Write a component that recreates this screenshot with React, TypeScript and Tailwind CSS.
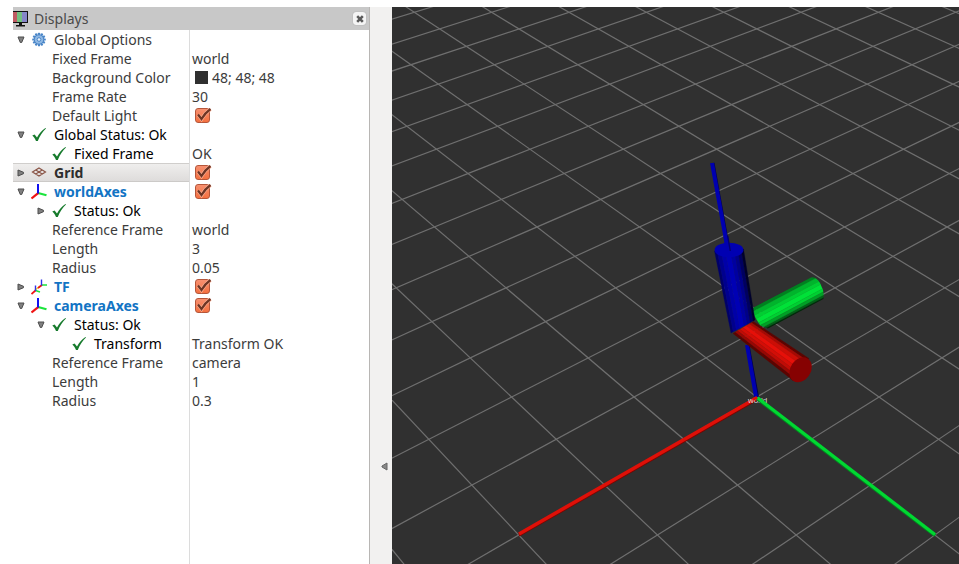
import { useState } from "react";
import type { ReactNode } from "react";

type Pt = [number, number];

type RowData = {
  id: string;
  depth: 0 | 1 | 2;
  label: string;
  kind: "group" | "status" | "display" | "property";
  icon?: "gear" | "check" | "grid" | "axes" | "tf";
  open?: boolean;
  value?: string;
  swatch?: boolean;
  checkbox?: boolean;
  selected?: boolean;
};

const ROWS: RowData[] = [
  { id: "options", depth: 0, label: "Global Options", kind: "group", icon: "gear", open: true },
  { id: "options-frame", depth: 1, label: "Fixed Frame", kind: "property", value: "world" },
  { id: "options-bg", depth: 1, label: "Background Color", kind: "property", value: "48; 48; 48", swatch: true },
  { id: "options-rate", depth: 1, label: "Frame Rate", kind: "property", value: "30" },
  { id: "options-light", depth: 1, label: "Default Light", kind: "property", checkbox: true },
  { id: "status", depth: 0, label: "Global Status: Ok", kind: "status", icon: "check", open: true },
  { id: "status-frame", depth: 1, label: "Fixed Frame", kind: "status", icon: "check", value: "OK" },
  { id: "grid", depth: 0, label: "Grid", kind: "display", icon: "grid", open: false, checkbox: true, selected: true },
  { id: "world", depth: 0, label: "worldAxes", kind: "display", icon: "axes", open: true, checkbox: true },
  { id: "world-status", depth: 1, label: "Status: Ok", kind: "status", icon: "check", open: false },
  { id: "world-frame", depth: 1, label: "Reference Frame", kind: "property", value: "world" },
  { id: "world-length", depth: 1, label: "Length", kind: "property", value: "3" },
  { id: "world-radius", depth: 1, label: "Radius", kind: "property", value: "0.05" },
  { id: "tf", depth: 0, label: "TF", kind: "display", icon: "tf", open: false, checkbox: true },
  { id: "camera", depth: 0, label: "cameraAxes", kind: "display", icon: "axes", open: true, checkbox: true },
  { id: "camera-status", depth: 1, label: "Status: Ok", kind: "status", icon: "check", open: true },
  { id: "camera-transform", depth: 2, label: "Transform", kind: "status", icon: "check", value: "Transform OK" },
  { id: "camera-frame", depth: 1, label: "Reference Frame", kind: "property", value: "camera" },
  { id: "camera-length", depth: 1, label: "Length", kind: "property", value: "1" },
  { id: "camera-radius", depth: 1, label: "Radius", kind: "property", value: "0.3" },
];

const INDENT = ["pl-0", "pl-5", "pl-10"];

function MonitorIcon() {
  return (
    <svg width="15" height="16" viewBox="0 0 15 16" aria-hidden="true">
      <rect x="-1" y="0" width="16" height="12" fill="#111" />
      <rect x="0" y="1" width="4" height="10" fill="#c05a62" />
      <rect x="4" y="1" width="5" height="10" fill="#74c080" />
      <rect x="9" y="1" width="5" height="10" fill="#8585c8" />
      <path d="M6 12h3v2h3v1.5H3V14h3z" fill="#111" />
    </svg>
  );
}

function GearIcon() {
  const teeth = Array.from({ length: 12 }, (_, i) => i * 30);
  return (
    <svg width="16" height="16" viewBox="0 0 16 16" aria-hidden="true">
      {teeth.map((a) => (
        <rect key={a} x="6.900" y="0.700" width="2.200" height="3" rx=".6" fill="#4a86c8" transform={`rotate(${a} 8 7.500)`} />
      ))}
      <circle cx="8" cy="7.500" r="4.700" fill="#8fb8e4" stroke="#4a86c8" strokeWidth="1" />
      <circle cx="8" cy="7.500" r="1.800" fill="#e8f1fa" stroke="#3f7fc4" strokeWidth=".9" />
    </svg>
  );
}

function CheckIcon() {
  return (
    <svg width="16" height="16" viewBox="0 0 16 16" aria-hidden="true">
      <path d="M1.300 8.600 3.600 7.400 6 10.400C8 6.800 10.800 3.300 14.400 1L15 1.600C11.700 4.700 8.800 9 6.800 14H5C4.200 12 3 10 1.300 8.600z" fill="#167a2c" />
    </svg>
  );
}

function GridIcon() {
  return (
    <svg width="16" height="16" viewBox="0 0 16 16" aria-hidden="true">
      <path d="M8 3 14.500 7 8 11 1.500 7zM4.800 5l6.400 4M11.200 5l-6.400 4" fill="none" stroke="#8a5547" strokeWidth="1.200" />
    </svg>
  );
}

function AxesIcon() {
  return (
    <svg width="16" height="16" viewBox="0 0 16 16" aria-hidden="true">
      <path d="M7 9 15.500 11.300" stroke="#1be43c" strokeWidth="2.200" />
      <path d="M7.500 8.800 .5 14.500" stroke="#f01414" strokeWidth="2.200" />
      <path d="M7 9.500V0" stroke="#1010f0" strokeWidth="2" />
    </svg>
  );
}

function TfIcon() {
  return (
    <svg width="16" height="16" viewBox="0 0 16 16" aria-hidden="true">
      <path d="M4 11 10 6.500" stroke="#f0d020" strokeWidth="1.300" />
      <path d="M11 6H16M4.500 11.500 9 13" stroke="#1be43c" strokeWidth="1.500" />
      <path d="M11 6 7 9M4.500 11.500 .5 15" stroke="#f01414" strokeWidth="1.700" />
      <path d="M10.500 6.500V.5M4.500 12V6.500" stroke="#3030e8" strokeWidth="1.400" />
    </svg>
  );
}

const ICONS: Record<string, ReactNode> = {
  gear: <GearIcon />,
  check: <CheckIcon />,
  grid: <GridIcon />,
  axes: <AxesIcon />,
  tf: <TfIcon />,
};

function Expander({ open, label, onToggle }: { open: boolean; label: string; onToggle: () => void }) {
  return (
    <button type="button" aria-expanded={open} aria-label={`Toggle ${label}`} onClick={onToggle} className="flex h-full w-full items-center justify-center pr-0.5">
      <svg width="8" height="8" viewBox="0 0 8 8" aria-hidden="true">
        <path d={open ? "M1 1h6L4.700 6.500H3.300z" : "M1 1v6l5.500-2.300V3.300z"} fill="#808080" stroke="#4c4c4c" strokeWidth="1" strokeLinejoin="round" />
      </svg>
    </button>
  );
}

function Tick({ label }: { label: string }) {
  return (
    <label className="relative ml-[3px] block size-4">
      <input type="checkbox" defaultChecked aria-label={label} className="peer block size-[15px] appearance-none rounded-[3px] border border-[#b5563a] bg-white checked:bg-linear-to-b checked:from-[#f79070] checked:to-[#f4703f]" />
      <svg width="17" height="16" viewBox="0 0 17 16" aria-hidden="true" className="pointer-events-none absolute top-0 left-0 hidden peer-checked:block">
        <path d="M3 6.500 6.500 11Q10 5 15.500 1" fill="none" stroke="#fab096" strokeWidth="3.600" />
        <path d="M3 6.500 6.500 11Q10 5 15.500 1" fill="none" stroke="#6e3524" strokeWidth="2.200" />
      </svg>
    </label>
  );
}

function labelClass(row: RowData) {
  if (row.selected) return "font-bold text-[#2d2d2d]";
  if (row.kind === "display") return "font-bold text-[#1274c4]";
  if (row.kind === "status") return "text-black";
  return "text-[#3c3c3c]";
}

function DisplaysPanel() {
  const [open, setOpen] = useState<Record<string, boolean>>(() =>
    Object.fromEntries(ROWS.filter((r) => r.open !== undefined).map((r) => [r.id, !!r.open])),
  );

  let hiddenBelow = 99;
  const visible = ROWS.filter((row) => {
    if (row.depth > hiddenBelow) return false;
    hiddenBelow = row.open !== undefined && !open[row.id] ? row.depth : 99;
    return true;
  });

  return (
    <section aria-label="Displays" className="flex w-[357px] shrink-0 flex-col border-r border-[#b8b6b4] bg-white">
      <header className="flex h-[23px] shrink-0 items-center bg-[#c8c8c8] pr-[3px] text-[#4a4a4a]">
        <MonitorIcon />
        <h1 className="ml-1.5 flex-1">Displays</h1>
        <button type="button" aria-label="Close panel" className="flex size-[13px] items-center justify-center rounded-[3px] bg-[#f4f4f4] shadow-[0_0_1px_#888888]">
          <svg width="8" height="8" viewBox="0 0 8 8" aria-hidden="true">
            <path d="M1.200 1.200 6.800 6.800M6.800 1.200 1.200 6.800" stroke="#5a5a5a" strokeWidth="2.600" />
          </svg>
        </button>
      </header>
      <div className="flex flex-1 flex-col">
        <table className="w-full table-fixed border-separate border-spacing-0">
          <colgroup>
            <col className="w-[177px]" />
            <col />
          </colgroup>
          <tbody>
            {visible.map((row) => (
              <tr key={row.id} className="h-[19px]">
                <th scope="row" className={`h-[19px] border-r border-[#dcdcdc] p-0 text-left font-normal ${row.selected ? "bg-linear-to-b from-[#f0efee] to-[#dddbda] shadow-[inset_0_1px_#d0cecc,inset_0_-1px_#cccac8]" : ""}`}>
                  <div className={`flex h-[19px] items-center ${INDENT[row.depth]}`}>
                    <span className="h-full w-[18px] shrink-0">
                      {row.open !== undefined && (
                        <Expander open={open[row.id]} label={row.label} onToggle={() => setOpen({ ...open, [row.id]: !open[row.id] })} />
                      )}
                    </span>
                    {row.icon && <span className="mr-1.5 shrink-0">{ICONS[row.icon]}</span>}
                    <span className={`pl-px whitespace-nowrap ${labelClass(row)}`}>{row.label}</span>
                  </div>
                </th>
                <td className="h-[19px] p-0 pl-0.5 text-[#3c3c3c]">
                  {row.checkbox && <Tick label={row.label} />}
                  {row.value && (
                    <div className="flex h-[19px] items-center whitespace-nowrap">
                      {row.swatch && <span className="mr-1 ml-[3px] size-[13px] bg-[#303030]" />}
                      {row.value}
                    </div>
                  )}
                </td>
              </tr>
            ))}
          </tbody>
        </table>
        <div className="w-[177px] flex-1 border-r border-[#dcdcdc]" />
      </div>
    </section>
  );
}

/* Ground plane: cell spacing grows linearly with screen height, its inverse linearly with depth. */
function project(i: number, j: number): Pt {
  const spacing = 1 / (0.0081633 - 0.00031783 * (i + j));
  return [982 + spacing * ((j - i) / 2 - 1.84), 397 + (spacing - 122.5) / 0.1174];
}

const GRID_LINES = Array.from({ length: 61 }, (_, n) => n - 30).flatMap((k) => [
  [project(k, -18 - k), project(k, 7 - k)],
  [project(-18 - k, k), project(7 - k, k)],
]);

const mix = (a: Pt, b: Pt, t: number): Pt => [a[0] + (b[0] - a[0]) * t, a[1] + (b[1] - a[1]) * t];

function Facets({ near, far, stops }: { near: [Pt, Pt]; far: [Pt, Pt]; stops: [number, string][] }) {
  return (
    <>
      {stops.map(([t, color], n) => {
        const end = n + 1 < stops.length ? stops[n + 1][0] : 1;
        const pts = [mix(...near, t), mix(...far, t), mix(...far, end), mix(...near, end)];
        return <polygon key={n} points={pts.map((p) => p.join(",")).join(" ")} fill={color} stroke={color} strokeWidth="0.3" />;
      })}
    </>
  );
}

function Scene() {
  return (
    <svg role="img" aria-label="3D view" viewBox="392 7 567 557" preserveAspectRatio="xMinYMin slice" className="block h-full w-full">
      <g stroke="#6f6f6f" strokeWidth="1.2">
        {GRID_LINES.map(([a, b], n) => (
          <line key={n} x1={a[0]} y1={a[1]} x2={b[0]} y2={b[1]} />
        ))}
      </g>

      <path d="M713 163 729 251M748 345 757.500 397" stroke="#000050" strokeWidth="3" />
      <path d="M712 163 728 251M747 345 756 397" stroke="#0000b0" strokeWidth="4" />
      <path d="M757 399.500 519 535.500" stroke="#7a0400" strokeWidth="2.500" />
      <path d="M757 397.700 519 534" stroke="#de1008" strokeWidth="3.600" />
      <text x="748" y="403" fontSize="8" fill="#d8d8d8" fontFamily="Liberation Sans, sans-serif">world</text>
      <path d="M757 398.500 935 535.500" stroke="#008a20" strokeWidth="3.400" />
      <path d="M757.500 397.700 935 534.500" stroke="#00d832" strokeWidth="3.200" />
      <path d="M753 399.500 757 397.500" stroke="#de1008" strokeWidth="3" />

      <clipPath id="green-body">
        <path d="M745 312 811 277.500Q816 276.500 820 283L823 290Q824 295 823.300 299L768 328.500 745 320z" />
      </clipPath>
      <g clipPath="url(#green-body)">
        <Facets
          near={[[750, 309], [764, 331]]}
          far={[[818, 273], [830, 296]]}
          stops={[[0, "#008020"], [0.14, "#00b42c"], [0.3, "#00ce32"], [0.44, "#00e238"], [0.62, "#00d032"], [0.74, "#00a026"], [0.86, "#006418"], [0.94, "#002c0a"]]}
        />
      </g>

      <Facets
        near={[[731, 333], [755, 320]]}
        far={[[714.5, 251], [743.5, 249]]}
        stops={[[0, "#000068"], [0.09, "#00008e"], [0.22, "#0000a8"], [0.36, "#0000b4"], [0.55, "#0000a0"], [0.68, "#000088"], [0.8, "#000060"], [0.92, "#00002c"]]}
      />
      <ellipse cx="729" cy="250" rx="14.400" ry="7.300" fill="#0000b2" />
      <path d="M725.500 236 728 251" stroke="#0000b0" strokeWidth="4" />
      <path d="M727.700 236 730.300 251" stroke="#000070" strokeWidth="1.400" />

      <Facets
        near={[[753.5, 321.5], [733, 333.5]]}
        far={[[809, 358.5], [793, 380.5]]}
        stops={[[0, "#5c0400"], [0.1, "#a40a04"], [0.2, "#cc0e06"], [0.36, "#e61009"], [0.52, "#d40e07"], [0.66, "#c00c06"], [0.78, "#960804"], [0.9, "#5c0400"]]}
      />
      <ellipse cx="800.600" cy="369.800" rx="13.300" ry="10.200" fill="#860202" transform="rotate(-57 800.600 369.800)" />
    </svg>
  );
}

export default function App() {
  return (
    <main className="flex h-screen w-full overflow-hidden bg-white pt-[7px] pl-[13px] font-['Noto_Sans','Open_Sans',sans-serif] text-[14px] leading-[19px]">
      <DisplaysPanel />
      <div className="flex w-[22px] shrink-0 flex-col bg-[#f2f1f0] pt-[450px]">
        <button type="button" aria-label="Collapse panel" className="ml-1.5 flex h-[18px] w-4 items-center justify-center">
          <svg width="7" height="9" viewBox="0 0 7 9" aria-hidden="true">
            <path d="M6 1v7L1 5V4z" fill="#888" stroke="#666" />
          </svg>
        </button>
      </div>
      <div className="min-w-0 flex-1 overflow-hidden bg-[#303030]">
        <Scene />
      </div>
    </main>
  );
}
